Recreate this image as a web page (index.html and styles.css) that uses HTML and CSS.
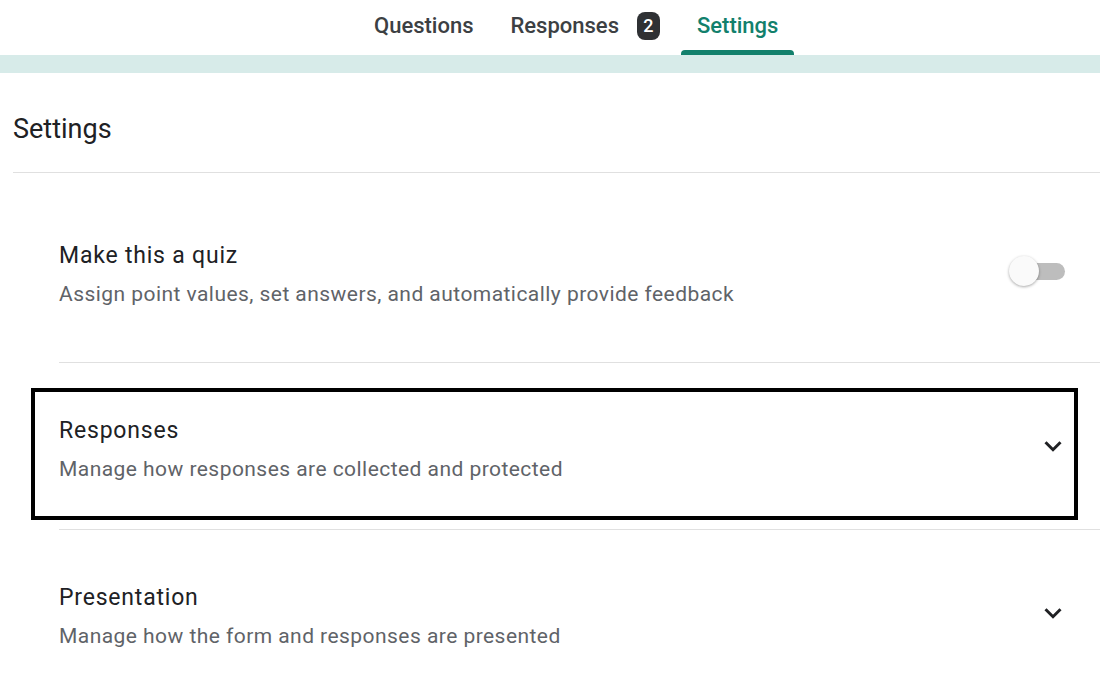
FILE: index.html
```html
<!DOCTYPE html>
<html lang="en">
<head>
<meta charset="utf-8">
<title>Settings</title>
<link rel="stylesheet" href="styles.css">
</head>
<body>
<header class="tabbar">
  <nav class="tabs">
    <a class="tab">Questions</a>
    <a class="tab">Responses <span class="badge">2</span></a>
    <a class="tab tab--active">Settings</a>
  </nav>
</header>
<div class="band"></div>
<main class="page">
  <h1 class="page-title">Settings</h1>
  <section class="list">
    <div class="item item--first">
      <div class="item-text">
        <div class="item-title">Make this a quiz</div>
        <div class="item-desc">Assign point values, set answers, and automatically provide feedback</div>
      </div>
      <div class="toggle"><span class="toggle-track"></span><span class="toggle-thumb"></span></div>
    </div>
    <div class="item item--highlight">
      <div class="item-text">
        <div class="item-title">Responses</div>
        <div class="item-desc">Manage how responses are collected and protected</div>
      </div>
      <svg class="chevron" viewBox="0 0 24 24" width="36" height="36"><path d="M7 9.5l5 5 5-5" fill="none" stroke="#202124" stroke-width="2"/></svg>
      <div class="highlight-box"></div>
    </div>
    <div class="item">
      <div class="item-text">
        <div class="item-title">Presentation</div>
        <div class="item-desc">Manage how the form and responses are presented</div>
      </div>
      <svg class="chevron" viewBox="0 0 24 24" width="36" height="36"><path d="M7 9.5l5 5 5-5" fill="none" stroke="#202124" stroke-width="2"/></svg>
    </div>
  </section>
</main>
</body>
</html>
```

FILE: styles.css
```css
* { box-sizing: border-box; }
html, body { margin: 0; padding: 0; background: #fff; }
body {
  font-family: Roboto, "Liberation Sans", Arial, sans-serif;
  color: #202124;
  width: 1100px;
  height: 677px;
  overflow: hidden;
}
.tabbar {
  height: 55px;
  background: #fff;
}
.tabs {
  display: flex;
  gap: 5px;
  padding-left: 358px;
  height: 55px;
}
.tab {
  position: relative;
  display: flex;
  align-items: center;
  gap: 18px;
  padding: 12px 16px 15px;
  font-size: 22px;
  line-height: 28px;
  font-weight: 500;
  color: #3c4043;
  letter-spacing: 0;
}
.tab--active { color: #12806c; }
.tab--active::after {
  content: "";
  position: absolute;
  left: 0;
  right: 0;
  bottom: 0;
  height: 5px;
  background: #12806c;
  border-radius: 4px 4px 0 0;
}
.badge {
  display: inline-flex;
  align-items: center;
  justify-content: center;
  width: 23px;
  height: 28px;
  border-radius: 8px;
  background: #2f3134;
  color: #fff;
  font-size: 18px;
  font-weight: 500;
}
.band {
  height: 18px;
  background: #d7ebe9;
}
.page-title {
  margin: 0 0 0 13px;
  padding: 38px 0 25px;
  font-size: 27px;
  line-height: 36px;
  font-weight: 400;
  color: #202124;
  border-bottom: 1px solid #e0e0e0;
}
.list {
  margin-left: 59px;
}
.item {
  position: relative;
  display: flex;
  align-items: center;
  justify-content: space-between;
  padding: 54px 29px 46px 0;
  border-top: 1px solid #e0e0e0;
}
.item--first {
  border-top: none;
  padding-top: 69px;
  padding-bottom: 54px;
}
.item-title {
  font-size: 23px;
  line-height: 28px;
  letter-spacing: 0.8px;
  color: #202124;
}
.item-desc {
  margin-top: 10px;
  font-size: 21px;
  line-height: 28px;
  letter-spacing: 0.45px;
  color: #5f6368;
}
.chevron { display: block; margin-bottom: 8px; }
.toggle {
  position: relative;
  width: 56px;
  height: 32px;
  margin-right: 6px;
  margin-bottom: 8px;
  display: flex;
  align-items: center;
}
.toggle-track {
  display: block;
  margin-left: 6px;
  width: 50px;
  height: 17px;
  border-radius: 9px;
  background: #bdbdbd;
}
.toggle-thumb {
  position: absolute;
  left: 0;
  top: 1px;
  width: 30px;
  height: 30px;
  border-radius: 50%;
  background: #fafafa;
  box-shadow: 0 1px 3px rgba(0,0,0,0.35);
}
.highlight-box {
  position: absolute;
  left: -28px;
  top: 25px;
  width: 1047px;
  height: 132px;
  border: 4px solid #000;
  pointer-events: none;
}
```
